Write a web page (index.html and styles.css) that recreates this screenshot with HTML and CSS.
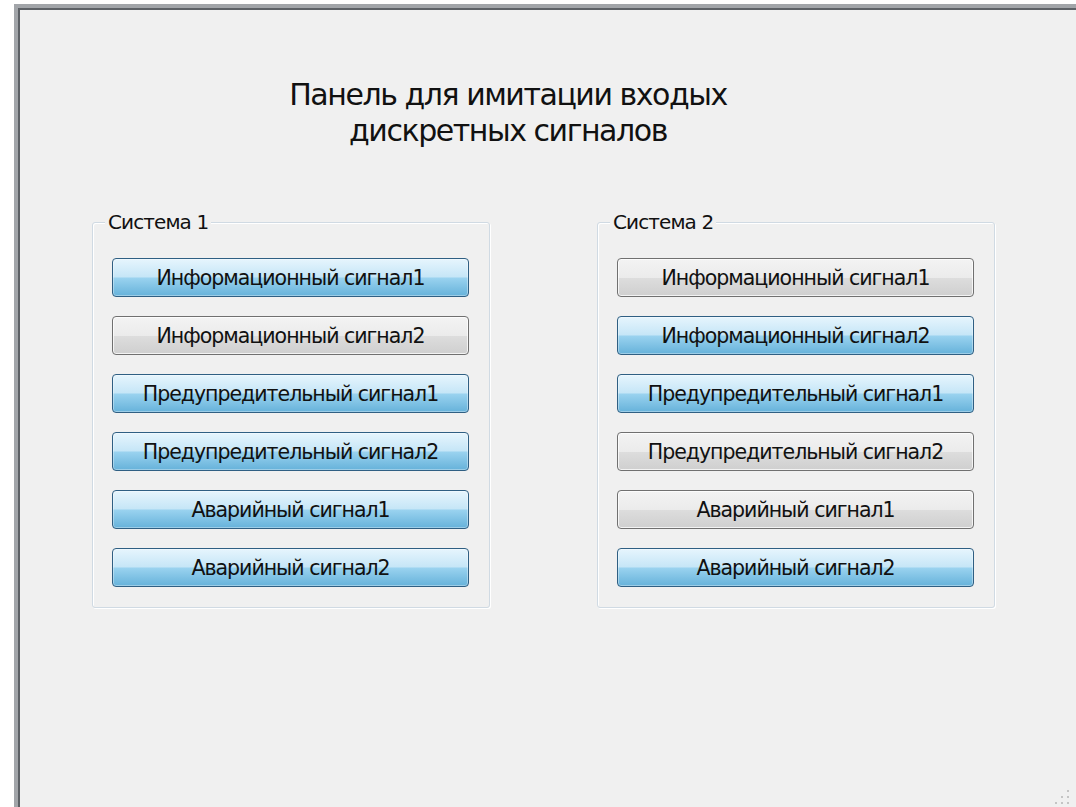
FILE: index.html
```html
<!DOCTYPE html>
<html lang="ru">
<head>
<meta charset="utf-8">
<title>Панель для имитации входых дискретных сигналов</title>
<link rel="stylesheet" href="styles.css">
</head>
<body>
<div class="window">
  <h1 class="title">Панель для имитации входых<br>дискретных сигналов</h1>

  <div class="groups">
    <section class="group">
      <span class="group-label">Система 1</span>
      <div class="buttons">
        <button class="btn on">Информационный сигнал1</button>
        <button class="btn">Информационный сигнал2</button>
        <button class="btn on">Предупредительный сигнал1</button>
        <button class="btn on">Предупредительный сигнал2</button>
        <button class="btn on">Аварийный сигнал1</button>
        <button class="btn on">Аварийный сигнал2</button>
      </div>
    </section>

    <section class="group">
      <span class="group-label">Система 2</span>
      <div class="buttons">
        <button class="btn">Информационный сигнал1</button>
        <button class="btn on">Информационный сигнал2</button>
        <button class="btn on">Предупредительный сигнал1</button>
        <button class="btn">Предупредительный сигнал2</button>
        <button class="btn">Аварийный сигнал1</button>
        <button class="btn on">Аварийный сигнал2</button>
      </div>
    </section>
  </div>

  <svg class="grip" width="16" height="16" viewBox="0 0 16 16" aria-hidden="true">
    <g fill="#c4c4c4">
      <rect x="12" y="1" width="2" height="2"/>
      <rect x="6" y="7" width="2" height="2"/>
      <rect x="12" y="7" width="2" height="2"/>
      <rect x="0" y="13" width="2" height="2"/>
      <rect x="6" y="13" width="2" height="2"/>
      <rect x="12" y="13" width="2" height="2"/>
    </g>
  </svg>
</div>
</body>
</html>
```

FILE: styles.css
```css
html, body {
  margin: 0;
  padding: 0;
  background: #ffffff;
}

body {
  font-family: "DejaVu Sans", "Liberation Sans", sans-serif;
  color: #000;
}

/* main window frame: only its top and left edges are visible */
.window {
  position: relative;
  box-sizing: border-box;
  margin: 4px 0 0 14px;
  width: 1062px;
  height: 803px;
  background: #f0f0f0;
  border-left: 4px solid #a2a5a9;
  border-top: 4px solid #a2a5a9;
  box-shadow: inset 2px 2px 0 #5d6166;
  overflow: hidden;
}

.title {
  margin: 0;
  padding-top: 69px;
  width: 620px;
  margin-left: 180px;
  text-align: center;
  font-size: 30px;
  font-weight: normal;
  line-height: 36px;
  letter-spacing: -1.45px;
  color: #111;
}

.groups {
  display: flex;
  gap: 107px;
  margin-top: 73px;
  padding-left: 74px;
}

.group {
  position: relative;
  box-sizing: border-box;
  width: 398px;
  height: 386px;
  border: 1px solid #d0dae3;
  border-radius: 3px;
  box-shadow: inset 1px 1px 0 #ffffff, 1px 1px 0 #ffffff;
  padding: 35px 20px 0 19px;
}

.group-label {
  position: absolute;
  left: 12px;
  top: -13px;
  padding: 0 3px;
  background: #f0f0f0;
  font-size: 20px;
  line-height: 24px;
  letter-spacing: -0.9px;
  color: #111;
}

.buttons {
  display: flex;
  flex-direction: column;
  gap: 19px;
}

.btn {
  box-sizing: border-box;
  width: 357px;
  height: 39px;
  padding: 0;
  margin: 0;
  border-radius: 4px;
  font-family: "DejaVu Sans", "Liberation Sans", sans-serif;
  font-size: 20.5px;
  letter-spacing: -1px;
  color: #111;
  border: 1px solid #707070;
  background: linear-gradient(#f3f3f3 0%, #ebebeb 50%, #dddddd 51%, #cfcfcf 100%);
  box-shadow: inset 0 0 0 1px rgba(255, 255, 255, 0.75);
  text-align: center;
}

.btn.on {
  border-color: #2f5f83;
  background: linear-gradient(#e6f5fd 0%, #c6e6f7 48%, #99d2ef 52%, #66b2da 100%);
  box-shadow: inset 0 0 0 1px rgba(255, 255, 255, 0.35);
}

.grip {
  position: absolute;
  right: 5px;
  bottom: 2px;
}
```
